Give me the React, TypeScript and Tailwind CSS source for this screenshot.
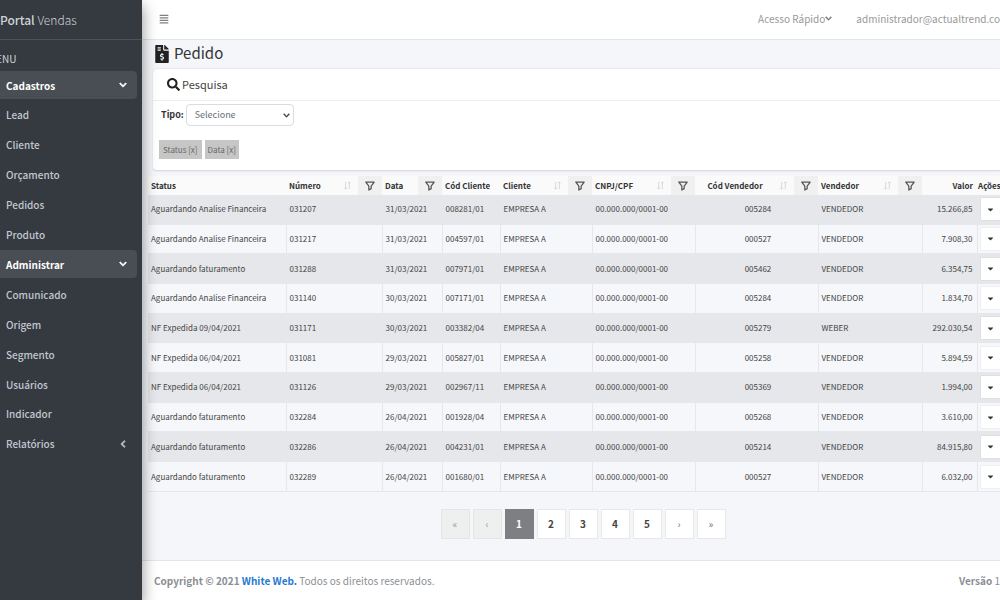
import React from "react";
import {
  FaAlignJustify,
  FaBullhorn,
  FaCaretDown,
  FaChevronDown,
  FaChevronLeft,
  FaFileInvoiceDollar,
  FaSearch,
  FaTags,
  FaUsersCog,
} from "react-icons/fa";

type MenuItem = {
  label: string;
  icon?: React.ReactNode;
  state?: "open" | "closed";
};

const menu: MenuItem[] = [
  { label: "Cadastros", state: "open" },
  { label: "Lead" },
  { label: "Cliente" },
  { label: "Orçamento" },
  { label: "Pedidos" },
  { label: "Produto" },
  { label: "Administrar", state: "open", icon: <FaUsersCog /> },
  { label: "Comunicado", icon: <FaBullhorn /> },
  { label: "Origem" },
  { label: "Segmento", icon: <FaTags /> },
  { label: "Usuários" },
  { label: "Indicador" },
  { label: "Relatórios", state: "closed" },
];

type Column = {
  label: string;
  width: string;
  head?: string;
  cell?: string;
  sort?: boolean;
  filter?: boolean;
};

const columns: Column[] = [
  { label: "Status", width: "w-[138px]" },
  { label: "Número", width: "w-[96px]", sort: true, filter: true },
  { label: "Data", width: "w-[60px]", filter: true },
  { label: "Cód Cliente", width: "w-[58px]" },
  { label: "Cliente", width: "w-[92px]", sort: true, filter: true },
  { label: "CNPJ/CPF", width: "w-[103px]", sort: true, filter: true },
  {
    label: "Cód Vendedor",
    width: "w-[123px]",
    head: "pl-[3px] text-center",
    cell: "pl-[3px] text-center",
    sort: true,
    filter: true,
  },
  { label: "Vendedor", width: "w-[104px]", sort: true, filter: true },
  { label: "Valor", width: "w-[55px]", head: "pr-1 text-right", cell: "pr-1 text-right" },
  { label: "Ações", width: "w-[23px]", head: "pl-px" },
];

const rows: string[][] = [
  ["Aguardando Analise Financeira", "031207", "31/03/2021", "008281/01", "EMPRESA A", "00.000.000/0001-00", "005284", "VENDEDOR", "15.266,85"],
  ["Aguardando Analise Financeira", "031217", "31/03/2021", "004597/01", "EMPRESA A", "00.000.000/0001-00", "000527", "VENDEDOR", "7.908,30"],
  ["Aguardando faturamento", "031288", "31/03/2021", "007971/01", "EMPRESA A", "00.000.000/0001-00", "005462", "VENDEDOR", "6.354,75"],
  ["Aguardando Analise Financeira", "031140", "30/03/2021", "007171/01", "EMPRESA A", "00.000.000/0001-00", "005284", "VENDEDOR", "1.834,70"],
  ["NF Expedida 09/04/2021", "031171", "30/03/2021", "003382/04", "EMPRESA A", "00.000.000/0001-00", "005279", "WEBER", "292.030,54"],
  ["NF Expedida 06/04/2021", "031081", "29/03/2021", "005827/01", "EMPRESA A", "00.000.000/0001-00", "005258", "VENDEDOR", "5.894,59"],
  ["NF Expedida 06/04/2021", "031126", "29/03/2021", "002967/11", "EMPRESA A", "00.000.000/0001-00", "005369", "VENDEDOR", "1.994,00"],
  ["Aguardando faturamento", "032284", "26/04/2021", "001928/04", "EMPRESA A", "00.000.000/0001-00", "005268", "VENDEDOR", "3.610,00"],
  ["Aguardando faturamento", "032286", "26/04/2021", "004231/01", "EMPRESA A", "00.000.000/0001-00", "005214", "VENDEDOR", "84.915,80"],
  ["Aguardando faturamento", "032289", "26/04/2021", "001680/01", "EMPRESA A", "00.000.000/0001-00", "000527", "VENDEDOR", "6.032,00"],
];

const pages = ["«", "‹", "1", "2", "3", "4", "5", "›", "»"];

function pageStyle(page: string) {
  if (page === "1") return "border-[#7d7f82] bg-[#7d7f82] font-bold text-white";
  if (page === "«" || page === "‹") return "border-[#e4e5e6] bg-[#eeefef] text-[#999]";
  if (page === "›" || page === "»") return "border-[#e6e8ea] bg-white text-[#777]";
  return "border-[#e6e8ea] bg-white font-bold text-[#444]";
}

function FilterIcon() {
  return (
    <svg viewBox="0 0 12 12" className="h-[10px] w-[10px]" fill="none" stroke="#555" strokeWidth="1.5" strokeLinejoin="round">
      <path d="M1 1.200h10L7.400 6v3.200L4.600 10.800V6z" />
    </svg>
  );
}

function SortIcon() {
  return (
    <svg viewBox="0 0 10 10" className="h-[9px] w-[9px]" fill="none" stroke="#d2d4d7" strokeWidth="1">
      <path d="M3 1v8M1.500 7.500 3 9l1.500-1.500M7 9V1M5.500 2.500 7 1l1.500 1.500" />
    </svg>
  );
}

function Sidebar() {
  return (
    <aside className="z-10 w-[142px] shrink-0 overflow-hidden bg-[#343a40] text-[#c2c7d0] shadow-[0_6px_14px_rgba(0,0,0,0.45)]">
      <a href="#inicio" className="block h-10 border-b border-[#4b545c] text-[12px] leading-10 whitespace-nowrap text-[#d0d3d6]">
        <b className="font-medium">Portal</b> <span className="font-light">Vendas</span>
      </a>
      <p className="-ml-3 pt-[9px] pb-[2px] text-[10px] leading-5 text-[#d0d4db]">MENU</p>
      <nav className="flex h-[387px] flex-col justify-between">
        {menu.map((item) => (
          <a
            key={item.label}
            href="#menu"
            className={
              item.state === "open"
                ? "mr-[5px] flex h-7 items-center rounded-r bg-[#494e54] pr-[10px] text-[10px] font-bold text-white"
                : "mr-[5px] flex h-7 items-center pr-[10px] text-[10px] font-medium"
            }
          >
            <span className="-ml-3 flex w-[18px] shrink-0 text-[11px]">{item.icon}</span>
            <span className="flex-1">{item.label}</span>
            {item.state === "open" && <FaChevronDown className="stroke-current stroke-[40] text-[8px]" />}
            {item.state === "closed" && <FaChevronLeft className="stroke-current stroke-[40] text-[8px]" />}
          </a>
        ))}
      </nav>
    </aside>
  );
}

function SearchCard() {
  return (
    <section className="ml-[5px] rounded-l-sm border-b border-[#dcdee0] bg-white shadow-[0_0_2px_rgba(0,0,0,0.15)]">
      <h2 className="flex h-8 items-center gap-[2px] border-b border-[#eceeef] pl-[14px] text-[11px] text-[#444]">
        <FaSearch className="text-[13px] text-[#222]" />
        Pesquisa
      </h2>
      <div className="flex items-center gap-[2px] pt-[3px] pl-2">
        <label htmlFor="tipo" className="text-[9px] font-bold text-[#333]">
          Tipo:
        </label>
        <div className="relative flex items-center">
          <select
            id="tipo"
            className="h-[22px] w-[108px] appearance-none rounded-sm border border-[#d9dce0] bg-white pl-2 text-[9px] leading-5 text-[#6a7077]"
          >
            <option>Selecione</option>
          </select>
          <FaChevronDown className="pointer-events-none absolute right-1 stroke-current stroke-[30] text-[7px] text-[#444]" />
        </div>
      </div>
      <div className="flex gap-[3px] px-[6px] pt-[14px] pb-[11px]">
        <button className="h-[19px] bg-[#c6c6c6] px-1 text-[8px] text-[#666]">Status [x]</button>
        <button className="h-[19px] bg-[#c6c6c6] px-[3px] text-[8px] text-[#666]">Data [x]</button>
      </div>
    </section>
  );
}

function OrdersTable() {
  return (
    <table className="mt-[5px] h-[316px] w-full table-fixed border-collapse text-[8px] leading-3 whitespace-nowrap text-[#444]">
      <thead>
        <tr className="h-[19px] bg-[#fafafb]">
          {columns.map((col) => (
            <th key={col.label} className={`${col.width} p-0 text-left font-bold text-[#333]`}>
              <div className="flex h-[19px] items-center">
                <span className={`flex-1 ${col.head ?? "pl-[3px]"}`}>{col.label}</span>
                {col.sort && (
                  <span className="flex w-[22px] justify-center">
                    <SortIcon />
                  </span>
                )}
                {col.filter && (
                  <span className="flex h-full w-6 items-center justify-center bg-[#f0f0f1]">
                    <FilterIcon />
                  </span>
                )}
              </div>
            </th>
          ))}
        </tr>
      </thead>
      <tbody>
        {rows.map((row) => (
          <tr key={row[1]} className="odd:bg-[#e6e7ea] even:bg-[#f6f7fa]">
            {row.map((value, i) => (
              <td key={i} className={`border-r border-b border-[#e5e7ea] py-0 ${columns[i].cell ?? "pl-[3px]"}`}>
                {value}
              </td>
            ))}
            <td className="border-b border-[#e5e7ea] p-0 pl-[3px]">
              <button
                aria-label={`Ações do pedido ${row[1]}`}
                className="flex h-[22px] w-full items-center justify-center bg-white text-[9px] text-[#333] shadow-[0_0_1px_rgba(0,0,0,0.2)]"
              >
                <FaCaretDown />
              </button>
            </td>
          </tr>
        ))}
      </tbody>
    </table>
  );
}

export default function App() {
  return (
    <div className="flex min-h-screen overflow-hidden bg-[#f4f6f9] font-['Noto_Sans_CJK_SC','Open_Sans',sans-serif]">
      <Sidebar />
      <div className="flex min-w-0 flex-1 flex-col">
        <header className="flex h-10 items-center border-b border-[#e3e6e9] bg-white pb-[2px] pl-[17px] text-[10px] whitespace-nowrap text-[#999]">
          <button aria-label="Alternar menu" className="text-[10px] text-[#808080]">
            <FaAlignJustify />
          </button>
          <a href="#acesso" className="ml-auto flex items-center">
            Acesso Rápido
            <FaChevronDown className="stroke-current stroke-[30] text-[7px] text-[#777]" />
          </a>
          <a href="#conta" className="ml-6">
            administrador@actualtrend.co
          </a>
        </header>
        <main className="flex-1 pl-[6px]">
          <h1 className="flex h-[29px] items-center gap-[3px] pb-[2px] pl-[6px] text-[15px] text-[#333]">
            <FaFileInvoiceDollar className="-ml-px text-[18px] text-[#222]" />
            Pedido
          </h1>
          <SearchCard />
          <OrdersTable />
          <nav aria-label="Paginação" className="flex justify-center gap-[3px] pt-[17px] pb-5 pl-[18px] text-[10px]">
            {pages.map((page) => (
              <button key={page} className={`h-[30px] w-[29px] border leading-4 ${pageStyle(page)}`}>
                {page}
              </button>
            ))}
          </nav>
        </main>
        <footer className="flex h-10 items-center justify-between border-t border-[#e3e6e9] bg-white pb-px pl-3 text-[10px] whitespace-nowrap text-[#8b8f94]">
          <p>
            <b>
              Copyright © 2021{" "}
              <a href="#white-web" className="text-[#1f7ad6]">
                White Web.
              </a>
            </b>{" "}
            Todos os direitos reservados.
          </p>
          <p>
            <b>Versão</b> 1
          </p>
        </footer>
      </div>
    </div>
  );
}
